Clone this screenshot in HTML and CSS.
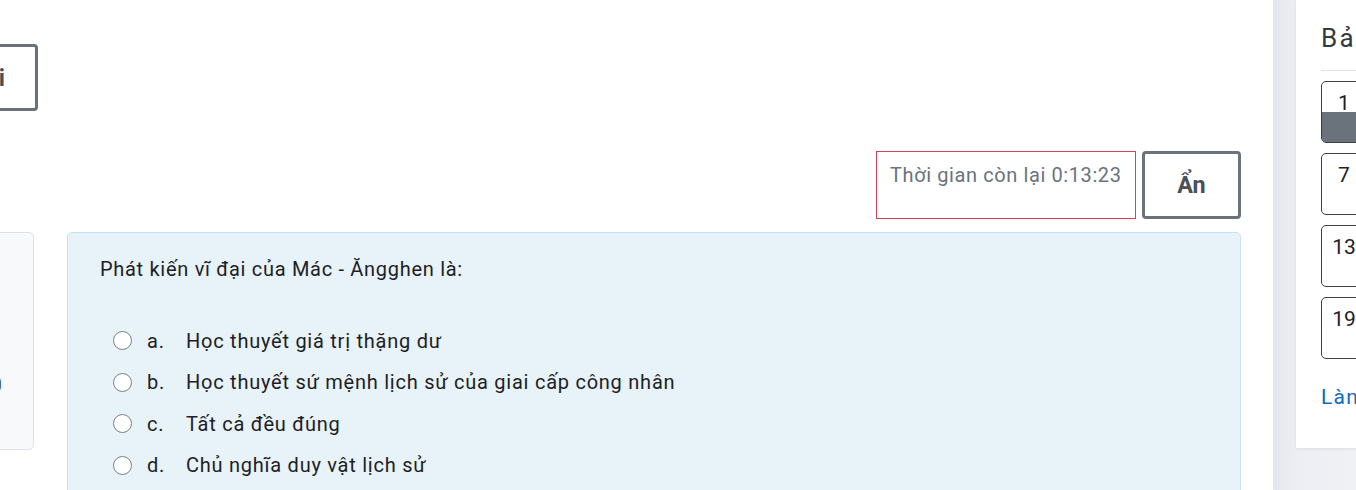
FILE: index.html
```html
<!DOCTYPE html>
<html lang="vi">
<head>
<meta charset="utf-8">
<title>Quiz</title>
<link rel="stylesheet" href="styles.css">
</head>
<body>
<div class="page">
  <main class="main">
    <div class="top-row">
      <button class="btn btn-top">Quay lại</button>
    </div>
    <div class="timer-row">
      <div class="timer">Thời gian còn lại 0:13:23</div>
      <button class="btn btn-hide">Ẩn</button>
    </div>
    <div class="question-row">
      <div class="info-card">
        <div class="info-line">Đạt điểm 1,00</div>
      </div>
      <div class="formulation">
        <div class="qtext">Phát kiến vĩ đại của Mác - Ăngghen là:</div>
        <div class="answers">
          <label class="option"><span class="radio"></span><span class="letter">a.</span><span class="opt-text">Học thuyết giá trị thặng dư</span></label>
          <label class="option"><span class="radio"></span><span class="letter">b.</span><span class="opt-text">Học thuyết sứ mệnh lịch sử của giai cấp công nhân</span></label>
          <label class="option"><span class="radio"></span><span class="letter">c.</span><span class="opt-text">Tất cả đều đúng</span></label>
          <label class="option"><span class="radio"></span><span class="letter">d.</span><span class="opt-text">Chủ nghĩa duy vật lịch sử</span></label>
        </div>
      </div>
    </div>
  </main>
  <aside class="drawer">
    <div class="drawer-card">
      <h3 class="nav-title">Bảng điều hướng bài kiểm tra</h3>
      <div class="nav-divider"></div>
      <div class="nav-buttons">
        <div class="qn qn-current"><span class="qn-num">1</span><span class="qn-fill"></span></div>
        <div class="qn"><span class="qn-num">7</span></div>
        <div class="qn"><span class="qn-num">13</span></div>
        <div class="qn"><span class="qn-num">19</span></div>
      </div>
      <a class="finish-link" href="#">Làm xong bài...</a>
    </div>
  </aside>
</div>
</body>
</html>
```

FILE: styles.css
```css
* { box-sizing: border-box; }
html, body {
  margin: 0;
  padding: 0;
  width: 1356px;
  height: 490px;
  overflow: hidden;
  background: #ffffff;
  font-family: Roboto, "Noto Sans", "Liberation Sans", sans-serif;
  color: #1d2125;
}
.page {
  display: flex;
  width: 1356px;
  height: 490px;
  overflow: hidden;
}
.main {
  width: 1273px;
  flex: 0 0 1273px;
  background: #ffffff;
  padding: 44px 32px 0 0;
  display: flex;
  flex-direction: column;
  overflow: hidden;
}
.btn {
  font-family: Roboto, "Noto Sans", "Liberation Sans", sans-serif;
  background: #ffffff;
  border: 3px solid #6a737b;
  border-radius: 4px;
  color: #495057;
  font-weight: 700;
  font-size: 23.4px;
  cursor: pointer;
}
.top-row {
  display: flex;
  height: 67px;
}
.btn-top {
  margin-left: -150px;
  width: 188px;
  flex: 0 0 188px;
  height: 67px;
  text-align: right;
  padding: 0 30px 0 0;
  white-space: nowrap;
}
.timer-row {
  margin-top: 40px;
  display: flex;
  justify-content: flex-end;
  gap: 6px;
  height: 68px;
}
.timer {
  width: 260px;
  height: 68px;
  border: 1px solid #cf4450;
  color: #6a737b;
  font-size: 20px;
  letter-spacing: 0.6px;
  line-height: 24px;
  padding: 11px 0 0 13px;
  white-space: nowrap;
  overflow: hidden;
}
.btn-hide {
  width: 99px;
  height: 68px;
  padding: 0;
}
.question-row {
  margin-top: 13px;
  display: flex;
  gap: 33px;
  align-items: flex-start;
}
.info-card {
  flex: 0 0 150px;
  width: 150px;
  min-width: 0;
  overflow: hidden;
  margin-left: -116px;
  height: 218px;
  background: #f8f9fa;
  border: 1px solid #dee2e6;
  border-radius: 5px;
  padding: 140px 31px 0 0;
  text-align: right;
  color: #495057;
  font-size: 21px;
  white-space: nowrap;
}
.info-line {
  display: flex;
  justify-content: flex-end;
}
.formulation {
  flex: 1 1 auto;
  min-width: 0;
  background: #e7f3f8;
  border: 1px solid #c8e2ec;
  border-radius: 5px;
  padding: 23px 32px 20px 32px;
  height: 300px;
}
.qtext {
  font-size: 20px;
  letter-spacing: 0.7px;
  line-height: 26px;
  color: #1d2125;
}
.answers {
  margin-top: 38px;
  display: flex;
  flex-direction: column;
}
.option {
  display: flex;
  align-items: center;
  height: 41.5px;
  font-size: 20px;
  letter-spacing: 0.75px;
  color: #1d2125;
  padding-left: 13px;
}
.radio {
  width: 19px;
  height: 19px;
  border: 1.6px solid #7a7f84;
  border-radius: 50%;
  background: #ffffff;
  flex: 0 0 19px;
}
.letter {
  margin-left: 15px;
  width: 39px;
}
.drawer {
  flex: 0 0 83px;
  width: 83px;
  height: 490px;
  background: linear-gradient(to right, #e4e6ee 0px, #eceef3 23px, #f0f1f5 100%);
  padding-left: 23px;
  overflow: hidden;
}
.drawer-card {
  width: 300px;
  height: 448px;
  background: #ffffff;
  box-shadow: 0 1px 3px rgba(0,0,0,0.08);
  padding: 23px 0 0 25px;
}
.nav-title {
  margin: 0;
  font-size: 26px;
  letter-spacing: 2.4px;
  font-weight: 400;
  line-height: 30px;
  color: #343a40;
  white-space: nowrap;
}
.nav-divider {
  margin-top: 17px;
  height: 1px;
  background: #dee2e6;
}
.nav-buttons {
  margin-top: 10px;
  display: flex;
  flex-direction: column;
  gap: 10px;
}
.qn {
  width: 46px;
  height: 62px;
  border: 1px solid #3a3f44;
  border-radius: 5px;
  overflow: hidden;
  display: flex;
  flex-direction: column;
  color: #1d2125;
}
.qn-num {
  display: block;
  height: 30px;
  padding-top: 12px;
  font-size: 21px;
  line-height: 18px;
  text-align: center;
}
.qn-fill {
  display: block;
  flex: 1 1 auto;
  background: #6a737b;
}
.finish-link {
  display: block;
  margin-top: 26px;
  font-size: 21px;
  letter-spacing: 1.2px;
  line-height: 24px;
  color: #0f6cbf;
  text-decoration: none;
  white-space: nowrap;
}
```
